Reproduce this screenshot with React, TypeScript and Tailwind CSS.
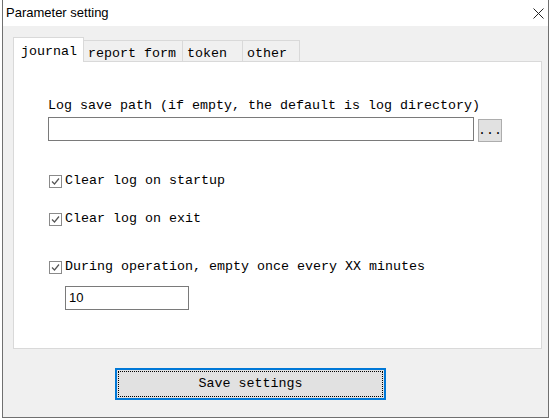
const mono = "font-['Liberation_Mono',monospace] text-[13.33px] leading-[16px] text-black";

function Check({ label }: { label: string }) {
  return (
    <div className="flex h-4 items-center">
      <span className="ml-px mr-[3px] flex h-[13px] w-[13px] items-center justify-center border border-[#8a8a8a] bg-white">
        <svg width="11" height="11" viewBox="0 0 11 11">
          <path d="M2 5.5 L4.5 8 L9 2.5" fill="none" stroke="#555" strokeWidth="1.2" />
        </svg>
      </span>
      <span className={mono}>{label}</span>
    </div>
  );
}

function Tab({ label, w, active }: { label: string; w: string; active?: boolean }) {
  return active ? (
    <div className={`relative z-10 -mb-px flex h-[25px] items-center border-x border-t border-[#d9d9d9] bg-white pl-[7px] pt-[4px] ${w}`}>
      <span className={mono}>{label}</span>
    </div>
  ) : (
    <div className={`flex h-[21px] items-center border-r border-t border-[#d9d9d9] bg-[#f0f0f0] pl-[4px] pt-[6px] ${w}`}>
      <span className={mono}>{label}</span>
    </div>
  );
}

export default function App() {
  return (
    <div className="h-[420px] w-[556px] overflow-hidden bg-white">
      <div className="ml-[2px] flex h-[418px] w-[547px] flex-col border-x border-b border-[#707070] bg-[#f0f0f0]">
        <div className="flex h-[26px] items-center justify-between bg-white pl-[3px] pr-[4px]">
          <span className="font-['Liberation_Sans',sans-serif] text-[13px] text-black">Parameter setting</span>
          <svg width="11" height="11" viewBox="0 0 11 11">
            <path d="M0.5 0.5 L10.5 10.5 M10.5 0.5 L0.5 10.5" stroke="#222" strokeWidth="1" />
          </svg>
        </div>

        <div className="pl-[10px] pt-[11px]">
          <div className="flex items-end">
            <Tab label="journal" w="w-[71px]" active />
            <Tab label="report form" w="w-[99px]" />
            <Tab label="token" w="w-[60px]" />
            <Tab label="other" w="w-[57px]" />
          </div>
          <div className="h-[288px] w-[529px] border border-[#d9d9d9] bg-white pl-[34px] pt-[36px]">
            <div className={mono}>Log save path (if empty, the default is log directory)</div>
            <div className="mt-[3px] flex items-start">
              <div className="h-6 w-[426px] border border-[#7a7a7a] bg-white" />
              <div className="ml-[4px] mt-[2px] flex h-[23px] w-[24px] items-end justify-center border border-[#adadad] bg-[#e1e1e1] pb-[2px]">
                <span className={mono}>...</span>
              </div>
            </div>
            <div className="mt-[31px]">
              <Check label="Clear log on startup" />
            </div>
            <div className="mt-[22px]">
              <Check label="Clear log on exit" />
            </div>
            <div className="mt-[32px]">
              <Check label="During operation, empty once every XX minutes" />
            </div>
            <div className="ml-[17px] mt-[11px] flex h-6 w-[124px] items-center border border-[#7a7a7a] bg-white pl-[3px] font-['Liberation_Sans',sans-serif] text-[13px] text-black">
              10
            </div>
          </div>
        </div>

        <div className="ml-[112px] mt-[19px] h-[32px] w-[271px] border-2 border-[#0078d7] bg-[#e1e1e1] p-px">
          <div className="flex h-full w-full items-center justify-center border border-dotted border-black">
            <span className={mono}>Save settings</span>
          </div>
        </div>
      </div>
    </div>
  );
}
